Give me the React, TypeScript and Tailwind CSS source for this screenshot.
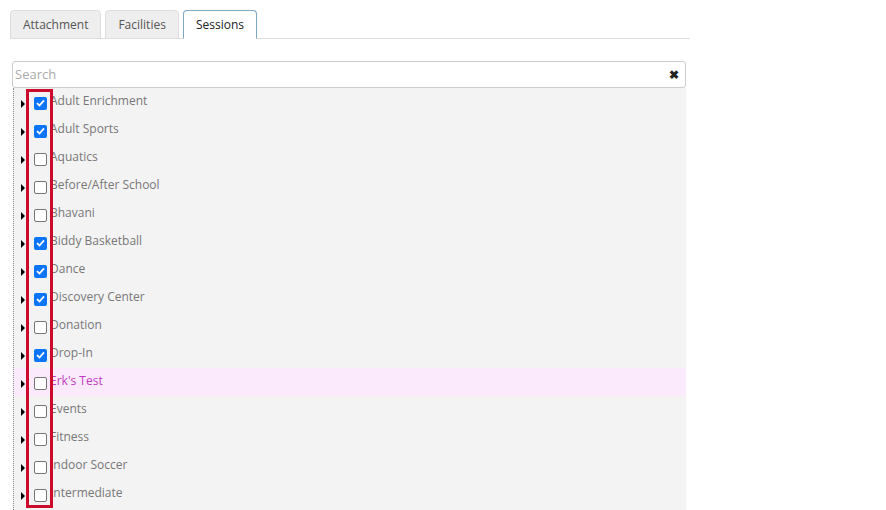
const sessions = [
  { name: "Adult Enrichment", checked: true },
  { name: "Adult Sports", checked: true },
  { name: "Aquatics", checked: false },
  { name: "Before/After School", checked: false },
  { name: "Bhavani", checked: false },
  { name: "Biddy Basketball", checked: true },
  { name: "Dance", checked: true },
  { name: "Discovery Center", checked: true },
  { name: "Donation", checked: false },
  { name: "Drop-In", checked: true },
  { name: "Erk's Test", checked: false, hover: true },
  { name: "Events", checked: false },
  { name: "Fitness", checked: false },
  { name: "Indoor Soccer", checked: false },
  { name: "Intermediate", checked: false },
];

const tabs = ["Attachment", "Facilities", "Sessions"];

function Checkbox({ checked }: { checked: boolean }) {
  return (
    <span
      className={`w-[13px] h-[13px] rounded-[2px] flex items-center justify-center shrink-0 ${
        checked ? "bg-[#0b75f5]" : "bg-white border border-[#767676]"
      }`}
    >
      {checked && (
        <svg width="9" height="8" viewBox="0 0 9 8">
          <path d="M1 4.2 L3.5 6.5 L8 1.3" stroke="white" strokeWidth="1.8" fill="none" />
        </svg>
      )}
    </span>
  );
}

export default function App() {
  return (
    <div
      className="w-[886px] h-[510px] bg-white overflow-hidden pt-[10px] pl-[10px]"
      style={{ fontFamily: '"Open Sans", sans-serif' }}
    >
      <div className="w-[680px] flex gap-[4px] border-b border-[#ddd] h-[29px]">
        {tabs.map((tab) => (
          <div
            key={tab}
            className={`h-[29px] px-[12px] flex items-center text-[12px] rounded-t-[4px] border ${
              tab === "Sessions"
                ? "bg-white border-[#7fa7c6] border-b-white text-[#222]"
                : "bg-[#eee] border-[#ddd] text-[#555]"
            }`}
          >
            {tab}
          </div>
        ))}
      </div>
      <div className="w-[674px] ml-[2px] mt-[22px]">
        <div className="h-[27px] border border-[#ccc] rounded-[3px] flex items-center justify-between pl-[2px] pr-[6px]">
          <span className="text-[13px] text-[#aaa] mt-[1px]">Search</span>
          <span className="text-[12px] font-bold text-[#222] leading-none">✖</span>
        </div>
        <div className="relative border-l border-dotted border-[#888] bg-[#f3f3f3] ml-[1px] h-[500px]">
          {sessions.map((s) => (
            <div
              key={s.name}
              className={`h-[28px] flex items-center ${s.hover ? "bg-[#fbeafb]" : ""}`}
            >
              <span className="ml-[7px] w-0 h-0 border-y-[4px] border-y-transparent border-l-[4px] border-l-black mt-[4px]" />
              <span className="ml-[9px] mt-[2px]">
                <Checkbox checked={s.checked} />
              </span>
              <span
                className={`ml-[3px] text-[12px] -mt-[2px] ${s.hover ? "text-[#c03cc0]" : "text-[#777]"}`}
              >
                {s.name}
              </span>
            </div>
          ))}
          <div className="absolute left-[12px] top-[1px] w-[27px] h-[419px] border-[3px] border-[#cc0a2c]" />
        </div>
      </div>
    </div>
  );
}
